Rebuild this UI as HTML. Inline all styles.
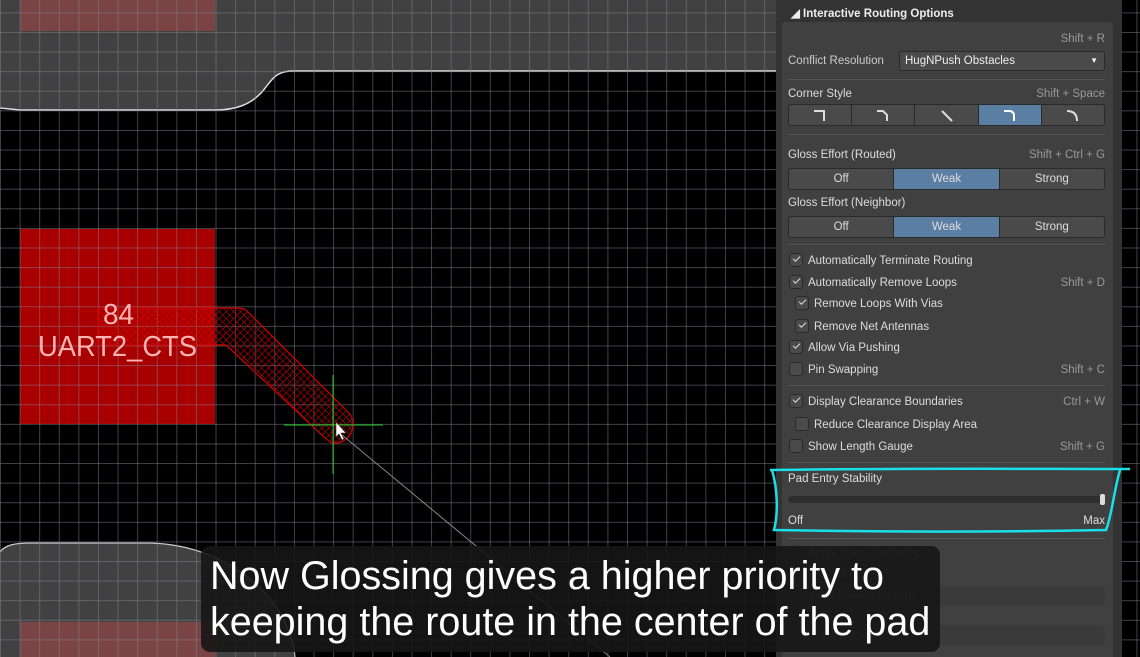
<!DOCTYPE html>
<html><head><meta charset="utf-8"><style>
*{margin:0;padding:0;box-sizing:border-box}
body{width:1140px;height:657px;overflow:hidden;background:#000;position:relative;font-family:"Liberation Sans",sans-serif}
.abs{position:absolute}
.grid{position:absolute;left:0;top:0;width:1140px;height:657px;
background-image:linear-gradient(to right,rgba(130,130,150,.5) 1px,transparent 1px),linear-gradient(to bottom,rgba(130,130,150,.5) 1px,transparent 1px);
background-size:19.6px 19.6px;background-position:19.6px 12.4px}
.panel{position:absolute;left:776px;top:0;width:346px;height:657px;background:#333;overflow:hidden}
.box{position:absolute;left:6px;top:22px;width:331px;height:640px;background:#404040;border-radius:3px}
.t{position:absolute;font-size:11.5px;color:#ddd;white-space:nowrap}
.k{position:absolute;font-size:11.5px;color:#999;white-space:nowrap;right:17px}
.sep{position:absolute;left:12px;width:317px;height:1px;background:#2a2a2a;border-bottom:1px solid #555}
.seg{position:absolute;height:22px;border:1px solid #2a2a2a;background:#4a4a4a;border-radius:3px;display:flex;overflow:hidden}
.seg div{flex:1;border-right:1px solid #2a2a2a;color:#ddd;font-size:11.5px;text-align:center;line-height:20px;display:flex;align-items:center;justify-content:center}
.seg div:last-child{border-right:none}
.seg .on{background:#5b7fa3}
.cb{position:absolute;width:14px;height:14px;border:1px solid #2a2a2a;background:#4a4a4a;border-radius:3px}
.cb.c::after{content:"";position:absolute;left:3px;top:2px;width:6px;height:3px;border-left:1.5px solid #ddd;border-bottom:1.5px solid #ddd;transform:rotate(-45deg)}
.dim{opacity:.3}
</style></head><body>
<svg class="abs" style="left:0;top:0" width="1140" height="657">
<path d="M0,0 H780 V71 H293 C275,71 272,80 262,92 C250,105 235,110 215,110 H20 L0,108 Z" fill="#414141"/>
<path d="M0,108 L20,110 H215 C235,110 250,105 262,92 C272,80 275,71 293,71 H780" fill="none" stroke="#ddd" stroke-width="1.5"/>
<path d="M0,552 C5,545 15,543 30,543 H150 C230,545 290,600 295,657 H0 Z" fill="#414141"/>
<path d="M0,552 C5,545 15,543 30,543 H150 C230,545 290,600 295,657" fill="none" stroke="#ccc" stroke-width="1.2"/>
<rect x="20" y="0" width="195" height="31" fill="#7a4444"/>
<rect x="20" y="622" width="195" height="35" fill="#7a4444"/>
<rect x="20" y="229" width="195" height="195" fill="#a80000"/>
</svg>
<div class="grid"></div>
<svg class="abs" style="left:0;top:0" width="1140" height="657">
<defs><pattern id="h" width="5" height="5" patternUnits="userSpaceOnUse" patternTransform="rotate(45)">
<path d="M0,0 H5 M0,0 V5" stroke="#e00000" stroke-width="1"/></pattern></defs>
<path d="M98,308 H238 C244,308 246,310 250,314 L348,412 C358,422 352,442 336,443 C330,443 327,440 323,436 L226,345 H98 Z" fill="url(#h)" stroke="#d00000" stroke-width="1.2"/>
<line x1="336" y1="430" x2="610" y2="657" stroke="#888" stroke-width="1"/>
<line x1="284" y1="425" x2="383" y2="425" stroke="#2c2" stroke-width="1"/>
<line x1="333" y1="375" x2="333" y2="474" stroke="#2c2" stroke-width="1"/>
<path d="M336,422 L336,437 L339,434 L342,440 L344,439 L341,433 L346,433 Z" fill="#fff" stroke="#333" stroke-width=".6"/>
<text x="103" y="324" font-family="Liberation Sans,sans-serif" font-size="29" fill="#ffb4b4" textLength="31" lengthAdjust="spacingAndGlyphs">84</text>
<text x="38" y="356" font-family="Liberation Sans,sans-serif" font-size="29" fill="#ffb4b4" textLength="159" lengthAdjust="spacingAndGlyphs">UART2_CTS</text>
</svg>
<div class="panel">
<div class="t" style="left:15px;top:6px;font-weight:bold;color:#eee">◢ Interactive Routing Options</div>
<div class="box"></div>
<div class="k" style="top:33px">Shift + R</div>
<div class="t" style="left:12px;top:55px;color:#ccc">Conflict Resolution</div>
<div class="abs" style="left:123px;top:51px;width:206px;height:20px;background:#4a4a4a;border:1px solid #2a2a2a;border-radius:3px;font-size:11.5px;color:#eee;line-height:18px;padding-left:5px">HugNPush Obstacles<span style="position:absolute;right:6px;top:0;font-size:8px">▼</span></div>
<div class="sep" style="top:79px"></div>
<div class="t" style="left:12px;top:88px">Corner Style</div>
<div class="k" style="top:88px">Shift + Space</div>
<div class="seg" style="left:12px;top:104px;width:317px">
<div><svg width="14" height="14"><path d="M1,3 H11 V13" fill="none" stroke="#ddd" stroke-width="2"/></svg></div>
<div><svg width="14" height="14"><path d="M1,3 H7 L11,7 V13" fill="none" stroke="#ddd" stroke-width="2"/></svg></div>
<div><svg width="14" height="14"><path d="M2,3 L12,13" fill="none" stroke="#ddd" stroke-width="2"/></svg></div>
<div class="on"><svg width="14" height="14"><path d="M1,3 H6 Q11,3 11,8 V13" fill="none" stroke="#fff" stroke-width="2"/></svg></div>
<div><svg width="14" height="14"><path d="M1,3 Q11,3 11,13" fill="none" stroke="#ddd" stroke-width="2"/></svg></div>
</div>
<div class="sep" style="top:134px"></div>
<div class="t" style="left:12px;top:149px">Gloss Effort (Routed)</div>
<div class="k" style="top:149px">Shift + Ctrl + G</div>
<div class="seg" style="left:12px;top:168px;width:317px"><div>Off</div><div class="on">Weak</div><div>Strong</div></div>
<div class="t" style="left:12px;top:197px">Gloss Effort (Neighbor)</div>
<div class="seg" style="left:12px;top:216px;width:317px"><div>Off</div><div class="on">Weak</div><div>Strong</div></div>
<div class="sep" style="top:244px"></div>
<div class="cb c" style="left:13px;top:253px"></div><div class="t" style="left:32px;top:255px">Automatically Terminate Routing</div>
<div class="cb c" style="left:13px;top:275px"></div><div class="t" style="left:32px;top:277px">Automatically Remove Loops</div><div class="k" style="top:277px">Shift + D</div>
<div class="cb c" style="left:19px;top:296px"></div><div class="t" style="left:38px;top:298px">Remove Loops With Vias</div>
<div class="cb c" style="left:19px;top:319px"></div><div class="t" style="left:38px;top:321px">Remove Net Antennas</div>
<div class="cb c" style="left:13px;top:340px"></div><div class="t" style="left:32px;top:342px">Allow Via Pushing</div>
<div class="cb" style="left:13px;top:362px"></div><div class="t" style="left:32px;top:364px">Pin Swapping</div><div class="k" style="top:364px">Shift + C</div>
<div class="sep" style="top:385px"></div>
<div class="cb c" style="left:13px;top:394px"></div><div class="t" style="left:32px;top:396px">Display Clearance Boundaries</div><div class="k" style="top:396px">Ctrl + W</div>
<div class="cb" style="left:19px;top:417px"></div><div class="t" style="left:38px;top:419px">Reduce Clearance Display Area</div>
<div class="cb" style="left:13px;top:439px"></div><div class="t" style="left:32px;top:441px">Show Length Gauge</div><div class="k" style="top:441px">Shift + G</div>
<div class="sep" style="top:462px"></div>
<div class="t" style="left:12px;top:473px">Pad Entry Stability</div>
<div class="abs" style="left:12px;top:496px;width:317px;height:7px;background:#2e2e2e;border-radius:4px"></div>
<div class="abs" style="left:324px;top:494px;width:5px;height:11px;background:#ddd;border-radius:2px"></div>
<div class="t" style="left:12px;top:515px">Off</div><div class="k" style="top:515px;color:#ddd">Max</div>
<div class="sep" style="top:538px"></div>
<div class="dim">
<div class="cb" style="left:13px;top:545px"></div><div class="t" style="left:32px;top:547px">Apply Trace Centering</div>
<div class="t" style="left:38px;top:568px">Adjust Gap</div>
<div class="t" style="left:25px;top:590px">Added Clearance Ratio</div>
<div class="abs" style="left:140px;top:586px;width:189px;height:20px;background:#2e2e2e;border-radius:3px"></div>
<div class="t" style="left:45px;top:631px">Miter Ratio</div>
<div class="abs" style="left:122px;top:625px;width:207px;height:20px;background:#2e2e2e;border-radius:3px"></div>
</div>
</div>
<svg class="abs" style="left:0;top:0" width="1140" height="657">
<path d="M770,470 C900,468 1030,469 1130,469 M1120,470 C1114,490 1112,515 1106,530 C1000,532 880,532 774,530 C778,515 778,490 772,470" fill="none" stroke="#19e0e8" stroke-width="2.5"/>
</svg>
<div class="abs" style="left:201px;top:546px;width:739px;height:106px;background:rgba(22,22,22,.9);border-radius:9px"></div>
<div class="abs" style="left:210px;top:553px;color:#fff;font-size:39.5px;line-height:46px;white-space:nowrap">Now Glossing gives a higher priority to<br>keeping the route in the center of the pad</div>
</body></html>
